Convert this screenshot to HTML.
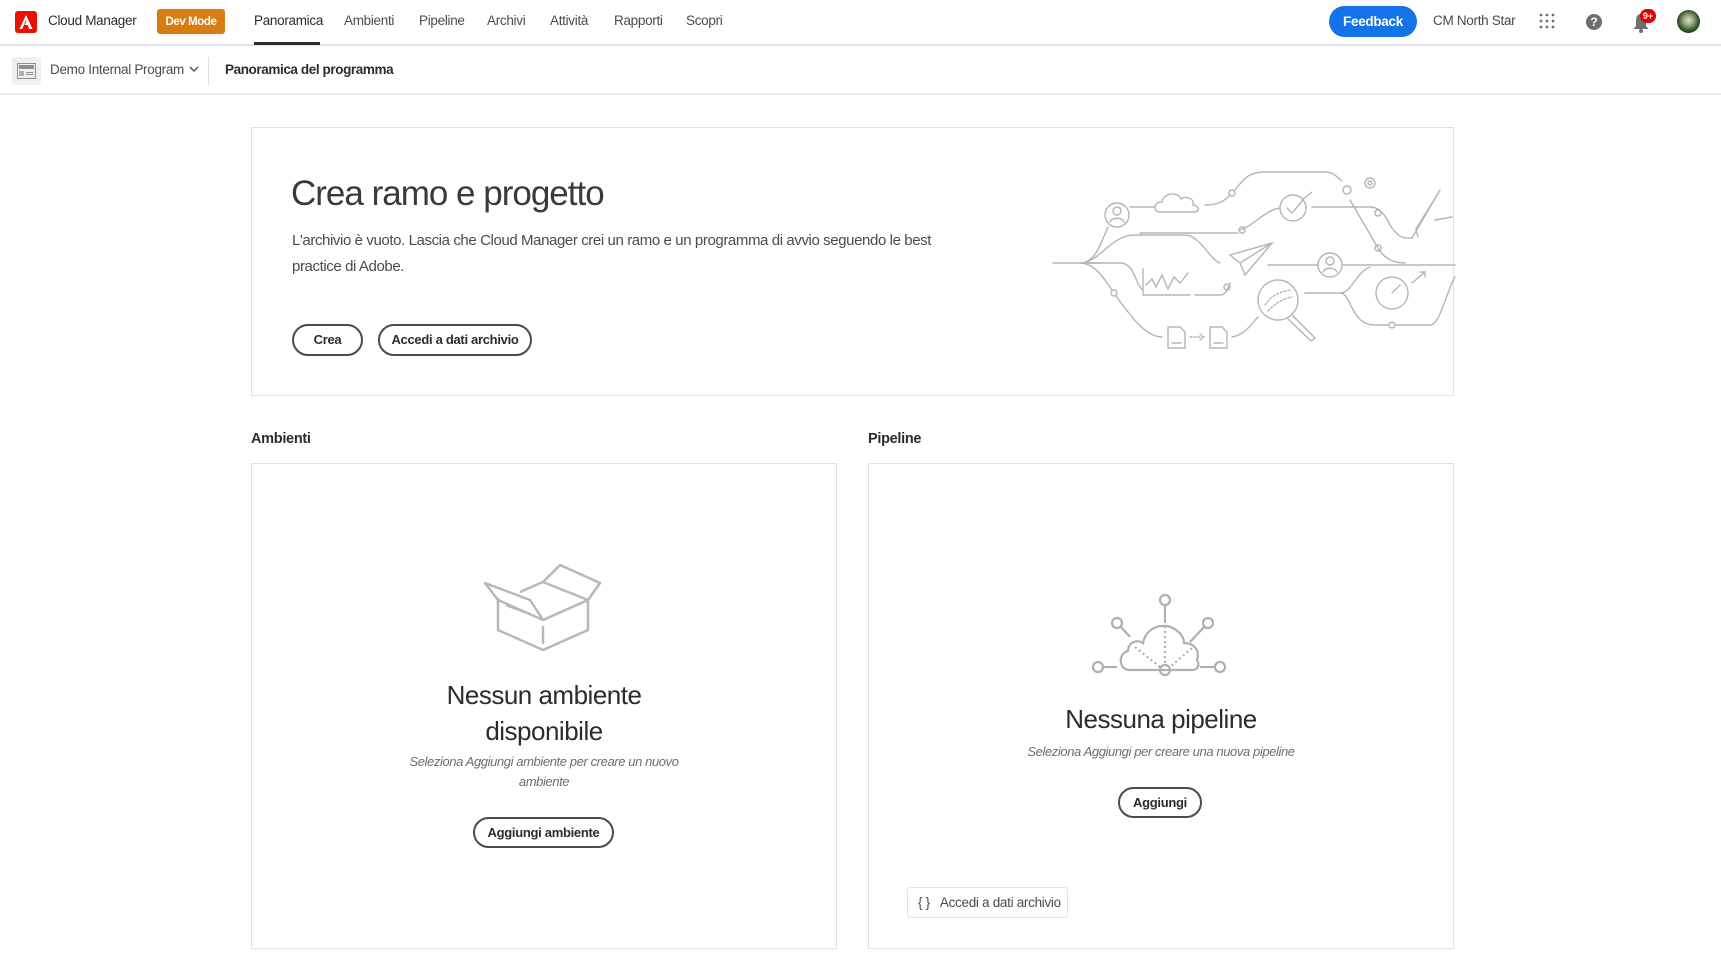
<!DOCTYPE html>
<html><head><meta charset="utf-8">
<style>
*{box-sizing:border-box;margin:0;padding:0}
body{width:1721px;height:966px;background:#fff;font-family:"Liberation Sans",sans-serif;color:#2c2c2c;position:relative;overflow:hidden}
.a{position:absolute;white-space:nowrap}
.nav{font-size:13.5px;color:#4b4b4b;letter-spacing:-0.3px;top:13px}
.btn{position:absolute;border:2px solid #4b4b4b;border-radius:16px;font-size:13px;font-weight:bold;color:#2c2c2c;text-align:center;letter-spacing:-0.3px}
.card{position:absolute;border:1px solid #e1e1e1;background:#fff}
</style></head><body>
<div class="a" style="left:0;top:0;width:1721px;height:46px;border-bottom:2px solid #e3e3e3"></div>
<svg class="a" style="left:15px;top:11px" width="22" height="22" viewBox="0 0 22 22"><rect width="22" height="22" rx="3" fill="#eb1000"/><path d="M11 4 L17.5 18 H14.3 L12.6 14 H9.5 L11.5 10.5 L11 9 L7.2 18 H4.5 Z" fill="#fff"/></svg>
<div class="a" style="left:48px;top:13px;font-size:13.5px;color:#2c2c2c;letter-spacing:-0.3px">Cloud Manager</div>
<div class="a" style="left:157px;top:9px;width:68px;height:25px;background:#d97d13;border-radius:3px;color:#fff;font-size:11.5px;font-weight:bold;text-align:center;line-height:25px;letter-spacing:-0.4px;padding-top:1px">Dev Mode</div>
<div class="a nav" style="left:254px;color:#2c2c2c">Panoramica</div>
<div class="a" style="left:254px;top:42px;width:66px;height:3px;background:#2c2c2c"></div>
<div class="a nav" style="left:344px">Ambienti</div>
<div class="a nav" style="left:419px">Pipeline</div>
<div class="a nav" style="left:487px">Archivi</div>
<div class="a nav" style="left:550px">Attività</div>
<div class="a nav" style="left:614px">Rapporti</div>
<div class="a nav" style="left:686px">Scopri</div>
<div class="a" style="left:1329px;top:6px;width:88px;height:31px;background:#1473e6;border-radius:16px;color:#fff;font-weight:bold;font-size:13.5px;text-align:center;line-height:31px;letter-spacing:-0.3px">Feedback</div>
<div class="a" style="left:1433px;top:13px;font-size:13.5px;color:#4b4b4b;letter-spacing:-0.3px">CM North Star</div>
<svg class="a" style="left:1539px;top:13px" width="16" height="16" viewBox="0 0 16 16" fill="#6e6e6e"><circle cx="2" cy="2" r="1.4"/><circle cx="8" cy="2" r="1.4"/><circle cx="14" cy="2" r="1.4"/><circle cx="2" cy="8" r="1.4"/><circle cx="8" cy="8" r="1.4"/><circle cx="14" cy="8" r="1.4"/><circle cx="2" cy="14" r="1.4"/><circle cx="8" cy="14" r="1.4"/><circle cx="14" cy="14" r="1.4"/></svg>
<div class="a" style="left:1586px;top:14px;width:16px;height:16px;border-radius:50%;background:#6e6e6e;color:#fff;font-size:12px;font-weight:bold;text-align:center;line-height:16px">?</div>
<svg class="a" style="left:1632px;top:12px" width="18" height="22" viewBox="0 0 18 22"><path d="M9 2 C4.5 2 4 6 4 10 L4 14 L1.5 17 H16.5 L14 14 L14 10 C14 6 13.5 2 9 2 Z" fill="#6e6e6e"/><circle cx="9" cy="19" r="2" fill="#6e6e6e"/></svg>
<div class="a" style="left:1640px;top:9px;width:16px;height:14px;border-radius:7px;background:#e30000;color:#fff;font-size:9px;font-weight:bold;text-align:center;line-height:14px">9+</div>
<div class="a" style="left:1677px;top:10px;width:23px;height:23px;border-radius:50%;background:radial-gradient(circle at 50% 45%,#d9e0c8 0,#93a77a 30%,#33502a 60%,#0f1d10 100%)"></div>
<div class="a" style="left:0;top:47px;width:1721px;height:48px;border-bottom:2px solid #ececec"></div>
<div class="a" style="left:12px;top:57px;width:29px;height:28px;background:#f0f0f0;border-radius:3px"></div>
<svg class="a" style="left:17px;top:63px" width="19" height="16" viewBox="0 0 19 16"><rect x="0.5" y="0.5" width="18" height="15" fill="none" stroke="#8e8e8e"/><rect x="2" y="2" width="15" height="4" fill="#8e8e8e"/><rect x="2" y="8" width="5" height="5" fill="#b0b0b0"/><rect x="9" y="9" width="7" height="1" fill="#8e8e8e"/><rect x="9" y="11" width="7" height="1" fill="#8e8e8e"/></svg>
<div class="a" style="left:50px;top:62px;font-size:13.5px;color:#4b4b4b;letter-spacing:-0.3px">Demo Internal Program</div>
<svg class="a" style="left:189px;top:66px" width="10" height="7" viewBox="0 0 10 7"><path d="M1 1 L5 5 L9 1" fill="none" stroke="#4b4b4b" stroke-width="1.4"/></svg>
<div class="a" style="left:208px;top:57px;width:1px;height:28px;background:#ddd"></div>
<div class="a" style="left:225px;top:62px;font-size:13.5px;font-weight:bold;color:#2c2c2c;letter-spacing:-0.4px">Panoramica del programma</div>
<div class="card" style="left:251px;top:127px;width:1203px;height:269px"></div>
<div class="a" style="left:291px;top:174px;font-size:35px;color:#3a3a3a;letter-spacing:-1px">Crea ramo e progetto</div>
<div class="a" style="left:292px;top:228px;font-size:15px;line-height:26px;color:#4b4b4b;letter-spacing:-0.4px">L'archivio è vuoto. Lascia che Cloud Manager crei un ramo e un programma di avvio seguendo le best<br>practice di Adobe.</div>
<div class="btn" style="left:292px;top:324px;width:71px;height:32px;line-height:28px">Crea</div>
<div class="btn" style="left:378px;top:324px;width:154px;height:32px;line-height:28px">Accedi a dati archivio</div>
<svg class="a" style="left:1040px;top:155px" width="420" height="205" viewBox="0 0 420 205" fill="none" stroke="#b5b5b5" stroke-width="1.4" stroke-linecap="round">
<path d="M13 108 H40 C55 108 60 90 68 72"/>
<circle cx="77" cy="60" r="12"/><circle cx="77" cy="56" r="4"/><path d="M70 67 C72 62 82 62 84 67"/>
<path d="M90 52 H115"/>
<path d="M120 57 C112 57 114 46 122 47 C123 38 138 36 141 44 C146 40 155 44 153 50 C160 51 160 57 154 57 Z"/>
<path d="M165 50 C180 50 185 45 190 40"/><circle cx="192" cy="38" r="3"/>
<path d="M195 35 C205 22 210 17 225 17 H285 C295 17 298 24 302 26"/>
<circle cx="307" cy="35" r="4"/><circle cx="330" cy="28" r="5"/><circle cx="330" cy="28" r="2"/>
<path d="M40 108 C60 108 70 80 95 80 H145 C160 80 170 105 180 108"/>
<path d="M40 108 H80 C95 108 95 130 103 135"/>
<path d="M200 75 C215 70 225 55 240 53"/><circle cx="202" cy="75" r="3"/><path d="M40 108 H60" />
<path d="M100 78 H198"/>
<circle cx="253" cy="53" r="13"/><path d="M247 53 L252 58 L263 45"/><path d="M262 45 L272 37"/>
<path d="M272 52 H330 C340 52 345 60 350 70 C360 85 365 83 372 83"/><circle cx="338" cy="58" r="3"/>
<path d="M372 83 L400 35 M395 65 L412 62 M400 35 L376 74 L378 82"/>
<path d="M310 45 L338 93 C345 105 355 108 365 108"/><circle cx="338" cy="93" r="3"/>
<path d="M190 100 L232 88 L205 120 L200 108 Z M200 108 L232 88"/>
<path d="M228 110 H277"/><circle cx="290" cy="110" r="12"/><circle cx="290" cy="106" r="4"/><path d="M283 117 C285 112 295 112 297 117"/>
<path d="M303 110 H415"/>
<path d="M103 114 V140 H150 M106 130 L112 124 L116 132 L122 120 L128 134 L134 122 L140 128 L148 118"/>
<path d="M155 140 H180 C185 140 188 135 190 128"/><circle cx="187" cy="132" r="3"/>
<circle cx="238" cy="145" r="20"/><path d="M252 160 L275 183 L271 186 L248 164"/>
<path d="M225 150 C232 140 240 137 250 135 M228 156 C235 148 245 143 252 142" stroke-dasharray="2 2"/>
<path d="M265 138 H300 C312 138 315 118 330 112"/>
<circle cx="352" cy="138" r="16"/><path d="M352 138 L360 130"/><path d="M372 128 L385 117 M380 117 H385 V122"/>
<path d="M300 138 C312 138 310 170 335 170 H349"/><circle cx="352" cy="170" r="3"/><path d="M355 170 H390 C400 170 405 140 415 122"/>
<path d="M40 108 C55 108 65 125 72 135"/><circle cx="74" cy="138" r="3"/>
<path d="M76 141 C90 160 105 182 122 182"/>
<path d="M128 172 H140 L145 177 V193 H128 Z M132 188 H141"/>
<path d="M150 182 H163 M160 179 L164 182 L160 185" stroke-dasharray="2 2"/>
<path d="M170 172 H182 L187 177 V193 H170 Z M174 188 H183"/>
<path d="M192 182 C205 180 212 168 218 162"/>
</svg>
<div class="a" style="left:251px;top:431px;font-size:14.5px;font-weight:bold;color:#2c2c2c;letter-spacing:-0.3px">Ambienti</div>
<div class="a" style="left:868px;top:431px;font-size:14.5px;font-weight:bold;color:#2c2c2c;letter-spacing:-0.3px">Pipeline</div>
<div class="card" style="left:251px;top:463px;width:586px;height:486px"></div>
<div class="card" style="left:868px;top:463px;width:586px;height:486px"></div>
<svg class="a" style="left:470px;top:550px" width="150" height="110" viewBox="0 0 150 110" fill="none" stroke="#b8b8b8" stroke-width="2.5" stroke-linejoin="round">
<path d="M28 48 V80 L73 100 L118 80 V50"/>
<path d="M15 33 L60 50 L73 70 L28 50 Z"/>
<path d="M73 70 L118 50 L130 33 L90 15 L73 32"/>
<path d="M50 42 L73 32 L118 50"/>
<path d="M36 55 L60 64"/>
<path d="M73 76 V94"/>
</svg>
<div class="a" style="left:251px;top:677px;width:586px;text-align:center;font-size:26px;line-height:36px;color:#2c2c2c;white-space:normal;letter-spacing:-0.5px">Nessun ambiente<br>disponibile</div>
<div class="a" style="left:251px;top:752px;width:586px;text-align:center;font-size:13px;line-height:20px;color:#6e6e6e;font-style:italic;white-space:normal;letter-spacing:-0.4px">Seleziona Aggiungi ambiente per creare un nuovo<br>ambiente</div>
<div class="btn" style="left:473px;top:817px;width:141px;height:31px;line-height:27px">Aggiungi ambiente</div>
<svg class="a" style="left:1080px;top:585px" width="160" height="100" viewBox="0 0 160 100" fill="none" stroke="#b0b0b0" stroke-width="2.2">
<path d="M50 85 C38 85 38 68 48 66 C48 57 58 54 63 58 C66 42 84 36 96 45 C103 50 104 55 104 58 C114 58 120 65 117 75 C120 80 118 85 112 85 Z"/>
<circle cx="85" cy="15" r="5"/><path d="M85 20 V36"/>
<circle cx="37" cy="38" r="5"/><path d="M41 42 L50 52"/>
<circle cx="128" cy="38" r="5"/><path d="M124 42 L110 57"/>
<circle cx="18" cy="82" r="5"/><path d="M23 82 H37"/>
<circle cx="140" cy="82" r="5"/><path d="M135 82 H120"/>
<circle cx="85" cy="85" r="5"/>
<path d="M85 36 V80 M55 62 L80 82 M112 63 L90 82" stroke-dasharray="2 3"/>
</svg>
<div class="a" style="left:868px;top:704px;width:586px;text-align:center;font-size:26px;color:#2c2c2c;letter-spacing:-0.5px">Nessuna pipeline</div>
<div class="a" style="left:868px;top:744px;width:586px;text-align:center;font-size:13px;color:#6e6e6e;font-style:italic;letter-spacing:-0.4px">Seleziona Aggiungi per creare una nuova pipeline</div>
<div class="btn" style="left:1118px;top:787px;width:84px;height:31px;line-height:27px">Aggiungi</div>
<div class="a" style="left:907px;top:887px;width:161px;height:31px;border:1px solid #e1e1e1;border-radius:3px;font-size:13.5px;color:#4b4b4b;line-height:29px;padding-left:10px;letter-spacing:-0.3px"><span style="margin-right:10px">{ }</span>Accedi a dati archivio</div>
</body></html>
